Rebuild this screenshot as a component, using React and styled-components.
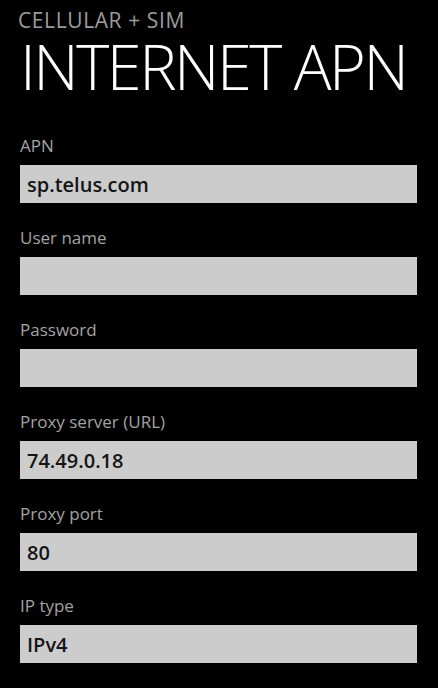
import React from "react";
import styled, { createGlobalStyle } from "styled-components";

const Global = createGlobalStyle`
  html, body {
    margin: 0;
    padding: 0;
    background: #000;
  }
  body {
    font-family: "Open Sans", "Noto Sans", sans-serif;
  }
`;

const Page = styled.div`
  width: 438px;
  height: 688px;
  background: #000;
  overflow: hidden;
  padding: 7px 21px 0 20px;
  box-sizing: border-box;
`;

const Section = styled.div`
  margin-left: -2px;
  font-size: 21px;
  color: #9c9c9c;
  line-height: 26px;
  letter-spacing: 0.6px;
`;

const Title = styled.h1`
  margin: 0;
  font-family: "Open Sans", sans-serif;
  font-size: 63px;
  font-weight: 300;
  color: #fff;
  line-height: 66px;
  letter-spacing: -2.5px;
  white-space: nowrap;
`;

const Form = styled.div`
  margin-top: 36px;
  display: flex;
  flex-direction: column;
  gap: 24px;
`;

const Field = styled.div`
  display: flex;
  flex-direction: column;
  gap: 8px;
`;

const Label = styled.label`
  font-size: 17px;
  color: #a3a3a3;
  line-height: 22px;
`;

const Input = styled.div`
  height: 38px;
  background: #cccccc;
  box-sizing: border-box;
  padding: 0 7px;
  display: flex;
  align-items: center;
  font-size: 20px;
  font-weight: 600;
  color: #151515;
`;

const fields = [
  { label: "APN", value: "sp.telus.com" },
  { label: "User name", value: "" },
  { label: "Password", value: "" },
  { label: "Proxy server (URL)", value: "74.49.0.18" },
  { label: "Proxy port", value: "80" },
  { label: "IP type", value: "IPv4" },
];

export default function App() {
  return (
    <>
      <Global />
      <Page>
        <Section>CELLULAR + SIM</Section>
        <Title>INTERNET APN</Title>
        <Form>
          {fields.map((f) => (
            <Field key={f.label}>
              <Label>{f.label}</Label>
              <Input>{f.value}</Input>
            </Field>
          ))}
        </Form>
      </Page>
    </>
  );
}
